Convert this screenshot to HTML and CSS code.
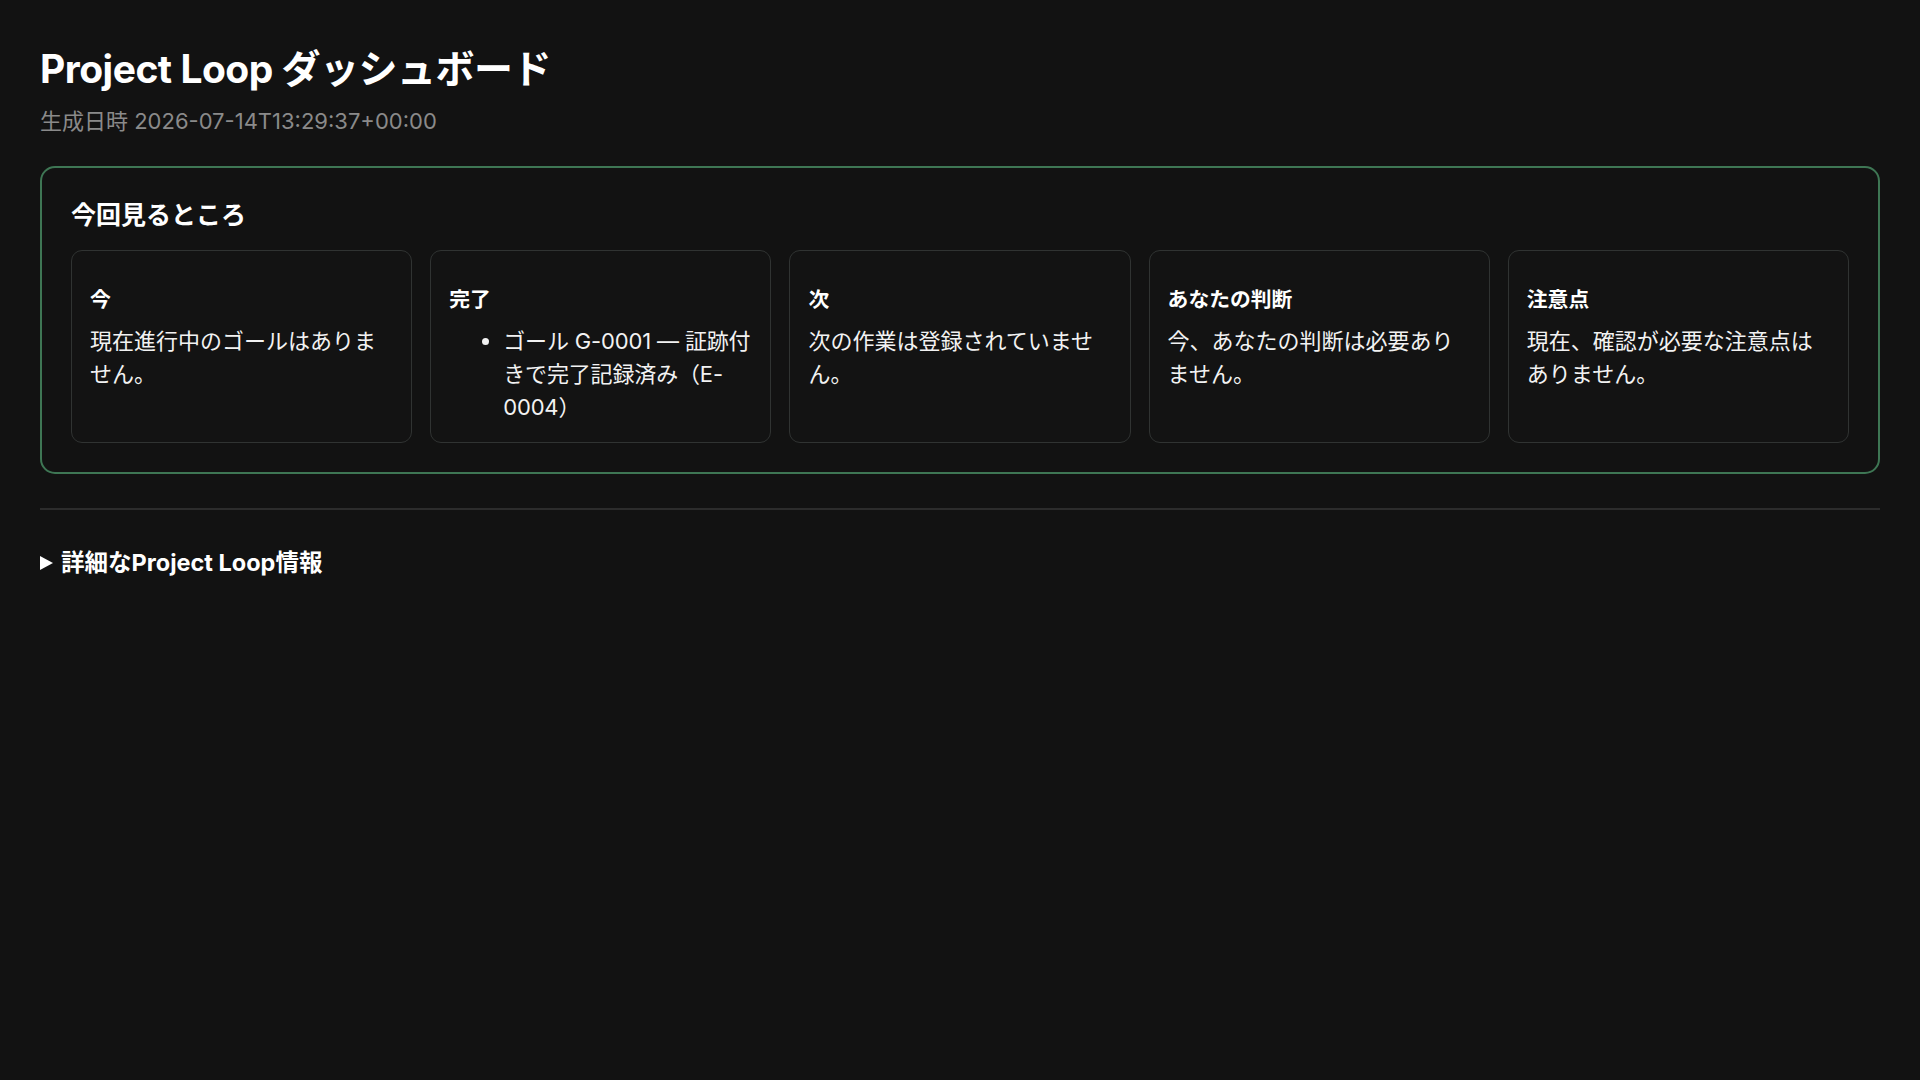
FILE: index.html
```html
<!DOCTYPE html>
<html lang="ja">
<head>
<meta charset="utf-8">
<title>Project Loop ダッシュボード</title>
<link rel="stylesheet" href="styles.css">
</head>
<body>
<main class="page">
  <header class="page-header">
    <h1 class="title">Project Loop ダッシュボード</h1>
    <p class="generated">生成日時 2026-07-14T13:29:37+00:00</p>
  </header>

  <section class="focus">
    <h2 class="focus-title">今回見るところ</h2>
    <div class="focus-grid">
      <article class="card">
        <h3 class="card-label">今</h3>
        <p class="card-text">現在進行中のゴールはありません。</p>
      </article>
      <article class="card">
        <h3 class="card-label">完了</h3>
        <ul class="card-list">
          <li>ゴール G-0001 — 証跡付きで完了記録済み（E-0004）</li>
        </ul>
      </article>
      <article class="card">
        <h3 class="card-label">次</h3>
        <p class="card-text">次の作業は登録されていません。</p>
      </article>
      <article class="card">
        <h3 class="card-label">あなたの判断</h3>
        <p class="card-text">今、あなたの判断は必要ありません。</p>
      </article>
      <article class="card">
        <h3 class="card-label">注意点</h3>
        <p class="card-text">現在、確認が必要な注意点はありません。</p>
      </article>
    </div>
  </section>

  <hr class="divider">

  <details class="details">
    <summary class="details-summary">詳細なProject Loop情報</summary>
  </details>
</main>
</body>
</html>
```

FILE: styles.css
```css
html, body {
  margin: 0;
  padding: 0;
  background: #121212;
}

body {
  color: #f2f2f2;
  font-family: Inter, "Noto Sans CJK JP", sans-serif;
  font-size: 22px;
  line-height: 1.5;
}

.page {
  padding: 40px;
}

.page-header {
  display: flex;
  flex-direction: column;
}

.title {
  margin: 6px 0 0;
  font-size: 39px;
  line-height: 45px;
  font-weight: 700;
  color: #ffffff;
  letter-spacing: -0.5px;
}

.generated {
  margin: 14px 0 0;
  font-size: 22px;
  line-height: 33px;
  color: #8a8a8a;
}

.focus {
  margin-top: 28px;
  border: 2px solid #3e7654;
  border-radius: 15px;
  padding: 30px 29px 29px;
}

.focus-title {
  margin: 0 0 17px;
  font-size: 25px;
  line-height: 35px;
  font-weight: 700;
  color: #ffffff;
}

.focus-grid {
  display: grid;
  grid-template-columns: repeat(5, 1fr);
  gap: 18px;
}

.card {
  border: 1px solid #303332;
  border-radius: 11px;
  padding: 18px;
  background: #131313;
}

.card-label {
  margin: 15px 0 10px;
  font-size: 20.8px;
  line-height: 31px;
  font-weight: 700;
  color: #ffffff;
}

.card-text {
  margin: 0;
}

.card-list {
  margin: 0;
  padding-left: 54px;
  letter-spacing: -0.15px;
}

.divider {
  margin: 34px 0 0;
  border: 0;
  border-top: 2px solid #2c2c2c;
}

.details {
  margin-top: 36px;
}

.details-summary {
  list-style: none;
  display: flex;
  align-items: center;
  gap: 8px;
  font-weight: 700;
  font-size: 23.5px;
  line-height: 33px;
  color: #ffffff;
  cursor: pointer;
}

.details-summary::-webkit-details-marker {
  display: none;
}

.details-summary::before {
  content: "";
  width: 0;
  height: 0;
  border-top: 7.5px solid transparent;
  border-bottom: 7.5px solid transparent;
  border-left: 13px solid #ffffff;
}
```
